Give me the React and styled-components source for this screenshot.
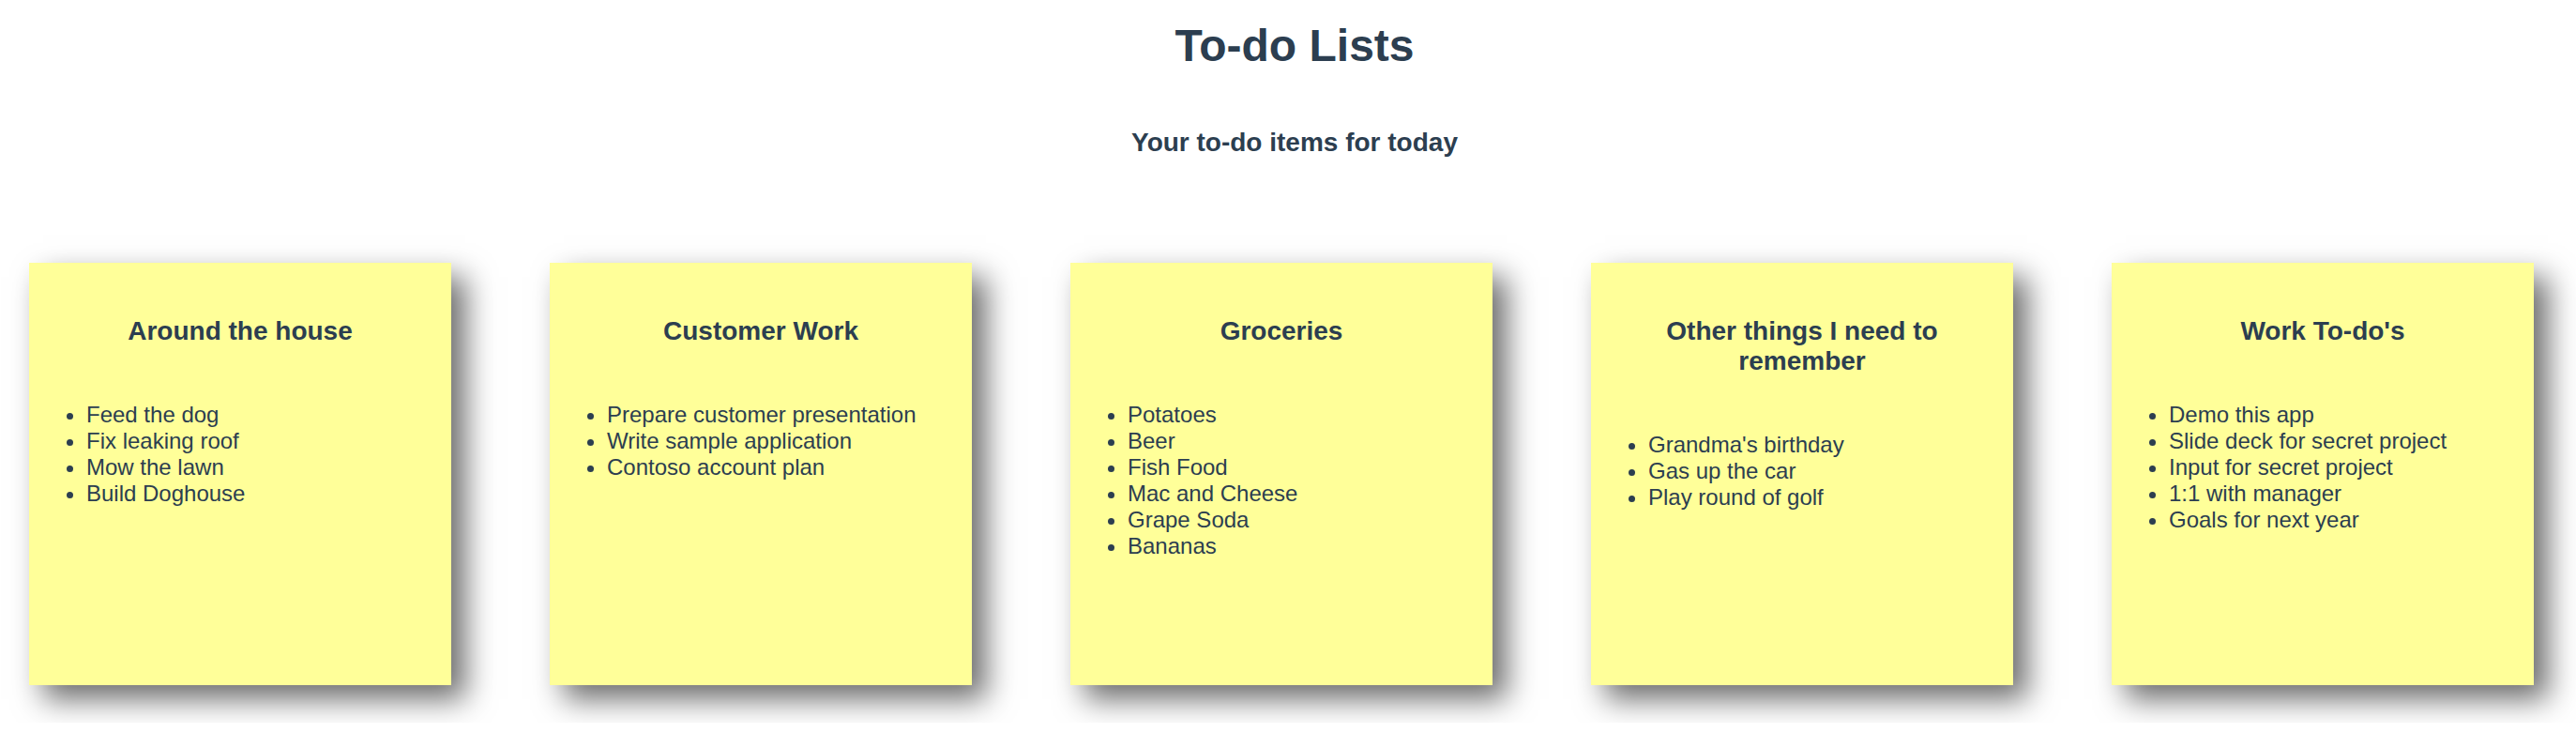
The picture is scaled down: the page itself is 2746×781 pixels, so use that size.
import styled, { createGlobalStyle } from 'styled-components';

const GlobalStyle = createGlobalStyle`
  html, body {
    margin: 0;
    padding: 0;
    background: #ffffff;
  }
  body {
    font-family: "Liberation Sans", Arial, Helvetica, sans-serif;
    color: #2c3e50;
  }
`;

const Page = styled.div`
  padding-top: 21px;
  padding-bottom: 40px;
`;

const Header = styled.header`
  padding-left: 14px;
  text-align: center;
`;

const Title = styled.h1`
  margin: 0;
  font-size: 48px;
  line-height: 55px;
  font-weight: 700;
`;

const Subtitle = styled.h3`
  margin: 60px 0 0;
  font-size: 28px;
  line-height: 32px;
  font-weight: 700;
`;

const Board = styled.div`
  display: flex;
  align-items: flex-start;
  gap: 105px;
  margin-top: 112px;
  padding-left: 31px;
`;

const Note = styled.div`
  flex: 0 0 450px;
  width: 450px;
  height: 450px;
  box-sizing: border-box;
  padding: 57px 24px 0;
  background: #ffff99;
  box-shadow: 15px 15px 30px rgba(0, 0, 0, 0.58);
`;

const NoteTitle = styled.h3`
  margin: 0;
  font-size: 28px;
  line-height: 32px;
  font-weight: 700;
  text-align: center;
`;

const Items = styled.ul`
  margin: 59px 0 0;
  padding-left: 37px;
  list-style: disc;
`;

const Item = styled.li`
  font-size: 24px;
  line-height: 28px;
`;

const lists = [
  {
    title: 'Around the house',
    items: ['Feed the dog', 'Fix leaking roof', 'Mow the lawn', 'Build Doghouse'],
  },
  {
    title: 'Customer Work',
    items: ['Prepare customer presentation', 'Write sample application', 'Contoso account plan'],
  },
  {
    title: 'Groceries',
    items: ['Potatoes', 'Beer', 'Fish Food', 'Mac and Cheese', 'Grape Soda', 'Bananas'],
  },
  {
    title: 'Other things I need to remember',
    items: ["Grandma's birthday", 'Gas up the car', 'Play round of golf'],
  },
  {
    title: "Work To-do's",
    items: [
      'Demo this app',
      'Slide deck for secret project',
      'Input for secret project',
      '1:1 with manager',
      'Goals for next year',
    ],
  },
];

function App() {
  return (
    <Page>
      <GlobalStyle />
      <Header>
        <Title>To-do Lists</Title>
        <Subtitle>Your to-do items for today</Subtitle>
      </Header>
      <Board>
        {lists.map((list) => (
          <Note key={list.title}>
            <NoteTitle>{list.title}</NoteTitle>
            <Items>
              {list.items.map((item) => (
                <Item key={item}>{item}</Item>
              ))}
            </Items>
          </Note>
        ))}
      </Board>
    </Page>
  );
}

export default App;
